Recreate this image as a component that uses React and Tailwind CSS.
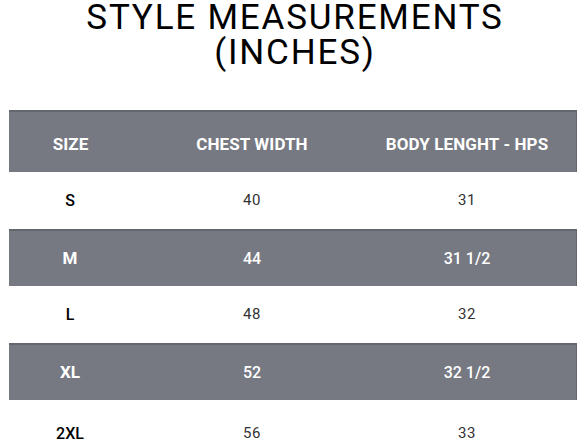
import React from 'react';

const rows = [
    { size: 'S', chest: '40', body: '31' },
    { size: 'M', chest: '44', body: '31 1/2' },
    { size: 'L', chest: '48', body: '32' },
    { size: 'XL', chest: '52', body: '32 1/2' },
    { size: '2XL', chest: '56', body: '33' },
];

const cols = "grid grid-cols-[122px_242px_188px_1fr] items-center";

const App = () => {
    return (
        <div className="w-[588px] h-[441px] overflow-hidden bg-white" style={{ fontFamily: 'Roboto, "Liberation Sans", sans-serif' }}>
            <h1 className="text-center text-[35px] leading-[35px] text-black tracking-[1.8px] pl-[2px]">
                STYLE MEASUREMENTS<br />(INCHES)
            </h1>
            <div className="ml-[9px] w-[568px] mt-[40px]">
                <div className={`${cols} h-[62px] pt-[5px] bg-[#767981] border-t-2 border-r border-[#63666d] text-white font-bold text-[17px] tracking-[0.1px]`}>
                    <div className="text-center pl-[1px]">SIZE</div>
                    <div className="text-center">CHEST WIDTH</div>
                    <div className="text-center">BODY LENGHT - HPS</div>
                    <div />
                </div>
                {rows.map((r, i) => {
                    const gray = i % 2 === 1;
                    return (
                        <div
                            key={r.size}
                            className={gray
                                ? `${cols} h-[57px] bg-[#767981] border-t-2 border-r border-[#63666d] text-white text-[16px]`
                                : `${cols} h-[57px] bg-white text-[15px] ${i === 4 ? 'pt-[10px]' : ''}`}
                        >
                            <div className={gray ? "text-center font-bold text-[17px]" : "text-center font-medium text-[16px] text-black"}>{r.size}</div>
                            <div className={gray ? "text-center font-medium" : "text-center text-[#333] tracking-[0.5px]"}>{r.chest}</div>
                            <div className={gray ? "text-center font-medium" : "text-center text-[#333] tracking-[0.5px]"}>{r.body}</div>
                            <div />
                        </div>
                    );
                })}
            </div>
        </div>
    );
};

export default App;
